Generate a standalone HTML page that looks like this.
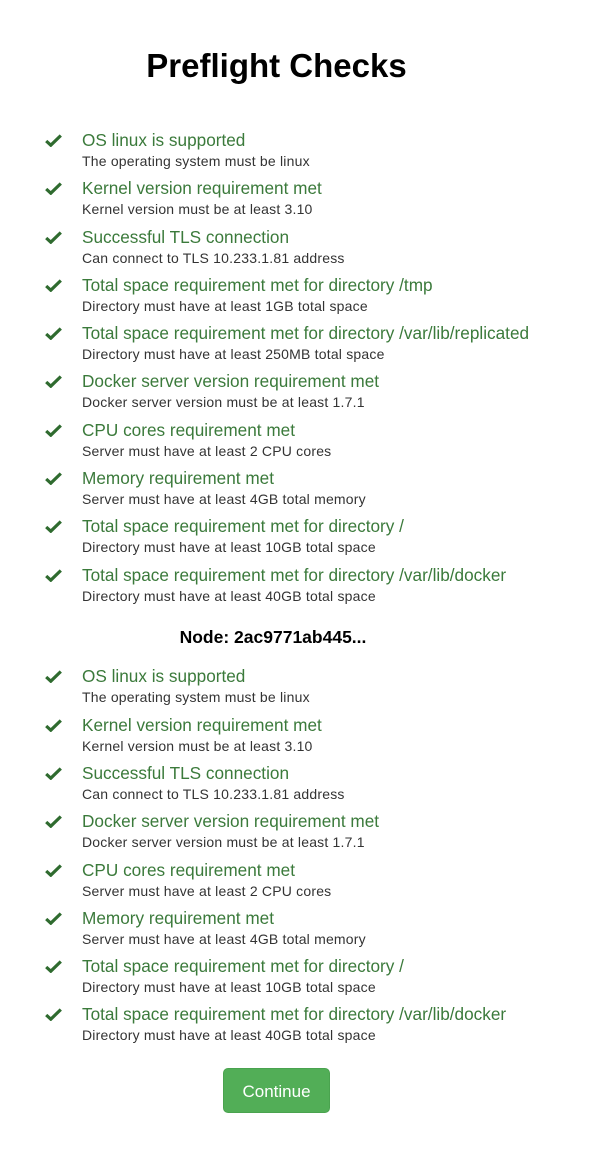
<!DOCTYPE html>
<html><head><meta charset="utf-8"><style>
body{margin:0;width:605px;height:1152px;background:#fff;font-family:"Liberation Sans",sans-serif;position:relative;overflow:hidden}
h1{position:absolute;left:0;width:553px;top:44px;margin:0;text-align:center;font-size:33px;font-weight:bold;color:#000;line-height:44px}
.it{position:absolute;left:0;width:605px;height:48px}
.it svg{position:absolute;left:45px;top:-5px}
.t{position:absolute;left:82px;top:-10px;font-size:17.2px;color:#3b7a3b;line-height:22px;white-space:nowrap}
.d{position:absolute;left:82px;top:14px;font-size:14px;letter-spacing:0.2px;color:#333;line-height:17px;white-space:nowrap}
.node{position:absolute;left:0;width:546px;top:627px;text-align:center;font-size:17.5px;font-weight:bold;line-height:20px}
.btn{position:absolute;left:223px;top:1068px;width:107px;height:45px;background:#52ae57;border-radius:5px;color:#fff;font-size:17px;text-align:center;line-height:45px;box-sizing:border-box;border:1px solid #4aa34f}
</style></head><body>
<h1>Preflight Checks</h1>
<div id="l"></div>
<div class="node">Node: 2ac9771ab445...</div>
<div class="btn">Continue</div>
<script>
var a=[[139,"OS linux is supported","The operating system must be linux"],
[187,"Kernel version requirement met","Kernel version must be at least 3.10"],
[236,"Successful TLS connection","Can connect to TLS 10.233.1.81 address"],
[284,"Total space requirement met for directory /tmp","Directory must have at least 1GB total space"],
[332,"Total space requirement met for directory /var/lib/replicated","Directory must have at least 250MB total space"],
[380,"Docker server version requirement met","Docker server version must be at least 1.7.1"],
[429,"CPU cores requirement met","Server must have at least 2 CPU cores"],
[477,"Memory requirement met","Server must have at least 4GB total memory"],
[525,"Total space requirement met for directory /","Directory must have at least 10GB total space"],
[574,"Total space requirement met for directory /var/lib/docker","Directory must have at least 40GB total space"],
[675,"OS linux is supported","The operating system must be linux"],
[724,"Kernel version requirement met","Kernel version must be at least 3.10"],
[772,"Successful TLS connection","Can connect to TLS 10.233.1.81 address"],
[820,"Docker server version requirement met","Docker server version must be at least 1.7.1"],
[869,"CPU cores requirement met","Server must have at least 2 CPU cores"],
[917,"Memory requirement met","Server must have at least 4GB total memory"],
[965,"Total space requirement met for directory /","Directory must have at least 10GB total space"],
[1013,"Total space requirement met for directory /var/lib/docker","Directory must have at least 40GB total space"]];
var h="";a.forEach(function(x){h+='<div class="it" style="top:'+x[0]+'px"><svg width="17" height="13" viewBox="0 0 17 13"><path d="M1.2 7L5.8 11.2L15.8 1.5" fill="none" stroke="#2f6b2f" stroke-width="3.2"/></svg><div class="t">'+x[1]+'</div><div class="d">'+x[2]+'</div></div>';});
document.getElementById("l").innerHTML=h;
</script>
</body></html>
